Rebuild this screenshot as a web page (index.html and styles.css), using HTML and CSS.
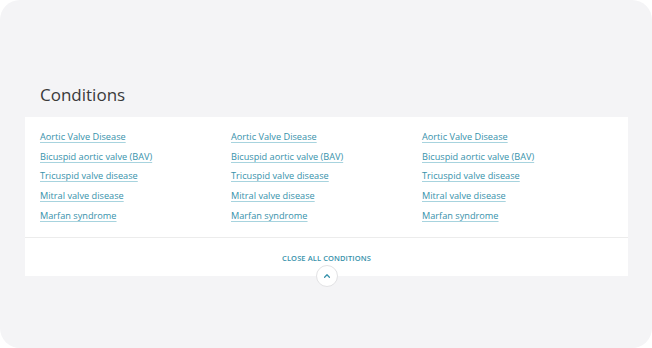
FILE: index.html
```html
<!DOCTYPE html>
<html>
<head>
    <title>Conditions</title>
    <link rel="stylesheet" href="styles.css">
</head>
<body>
    <div class="frame">
        <h2 class="section-title">Conditions</h2>
        <div class="conditions-box">
            <ul class="conditions-list">
                <li><a href="#">Aortic Valve Disease</a></li>
                <li><a href="#">Aortic Valve Disease</a></li>
                <li><a href="#">Aortic Valve Disease</a></li>
                <li><a href="#">Bicuspid aortic valve (BAV)</a></li>
                <li><a href="#">Bicuspid aortic valve (BAV)</a></li>
                <li><a href="#">Bicuspid aortic valve (BAV)</a></li>
                <li><a href="#">Tricuspid valve disease</a></li>
                <li><a href="#">Tricuspid valve disease</a></li>
                <li><a href="#">Tricuspid valve disease</a></li>
                <li><a href="#">Mitral valve disease</a></li>
                <li><a href="#">Mitral valve disease</a></li>
                <li><a href="#">Mitral valve disease</a></li>
                <li><a href="#">Marfan syndrome</a></li>
                <li><a href="#">Marfan syndrome</a></li>
                <li><a href="#">Marfan syndrome</a></li>
            </ul>
            <div class="conditions-footer">
                <a href="#" class="close-all">Close all conditions</a>
                <button class="toggle-btn" aria-label="Collapse">
                    <svg viewBox="0 0 10 10" width="8" height="8">
                        <path d="M2 6.5 L5 3.5 L8 6.5" fill="none" stroke="currentColor" stroke-width="1.6" stroke-linecap="round" stroke-linejoin="round"/>
                    </svg>
                </button>
            </div>
        </div>
    </div>
</body>
</html>
```

FILE: styles.css
```css
* {
    margin: 0;
    padding: 0;
    box-sizing: border-box;
    font-family: 'Open Sans', sans-serif;
}

body {
    background: #ffffff;
}

.frame {
    height: 348px;
    border-radius: 20px;
    background: #f4f4f6;
    padding: 83px 24px 0 25px;
}

.section-title {
    font-size: 17px;
    font-weight: 500;
    line-height: 24px;
    color: #3a3a3a;
    padding-left: 15px;
    margin-bottom: 10px;
}

.conditions-box {
    background: white;
}

.conditions-list {
    list-style: none;
    display: grid;
    grid-template-columns: repeat(3, 1fr);
    padding: 10px 15px 11px;
    border-bottom: 1px solid #ececec;
}

.conditions-list li {
    line-height: 19.7px;
    font-size: 9.2px;
}

.conditions-list a {
    color: #3792ab;
    text-decoration: underline;
    text-decoration-color: #a7d3de;
    text-decoration-thickness: 1px;
    text-underline-offset: 2px;
}

.conditions-footer {
    position: relative;
    height: 38px;
    display: flex;
    justify-content: center;
    padding-top: 15px;
}

.close-all {
    font-size: 7.5px;
    font-weight: 600;
    line-height: 10px;
    text-transform: uppercase;
    letter-spacing: 0.1px;
    color: #3792ab;
    text-decoration: none;
}

.toggle-btn {
    position: absolute;
    left: 50%;
    bottom: -11px;
    transform: translateX(-50%);
    width: 22px;
    height: 22px;
    border-radius: 50%;
    border: 1px solid #e2e2e4;
    background: white;
    color: #3792ab;
    display: flex;
    align-items: center;
    justify-content: center;
    cursor: pointer;
}
```
